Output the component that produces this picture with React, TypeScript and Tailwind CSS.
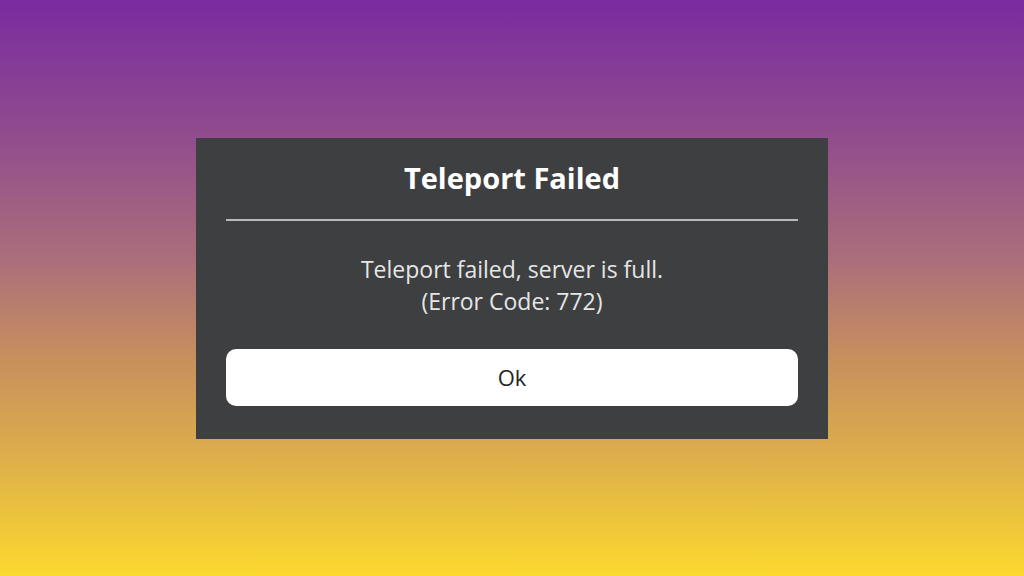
import React from 'react';

const App: React.FC = () => {
  return (
    <div
      className="w-[1024px] h-[576px] flex items-center justify-center bg-[linear-gradient(to_bottom,#7a2b9f_0%,#8f4a8f_22%,#ab6e7a_45%,#c68f5e_62%,#ddb04a_80%,#fbd92f_100%)]"
      style={{ fontFamily: '"Open Sans", "Noto Sans", sans-serif' }}
    >
      <div className="w-[632px] h-[301px] bg-[#3d3f41] flex flex-col items-center px-[30px] pt-[22px]">
        <h1 className="text-[29px] leading-[36px] font-bold text-white">Teleport Failed</h1>
        <div className="w-full h-[2px] bg-[#b9b9b9] mt-[23px]" />
        <div className="mt-[32px] text-[23px] leading-[32px] text-[#e6e6e6] text-center">
          <p>Teleport failed, server is full.</p>
          <p>(Error Code: 772)</p>
        </div>
        <button className="mt-[32px] w-full h-[57px] bg-white rounded-[10px] text-[22px] text-[#242424] flex items-center justify-center">
          Ok
        </button>
      </div>
    </div>
  );
};

export default App;
